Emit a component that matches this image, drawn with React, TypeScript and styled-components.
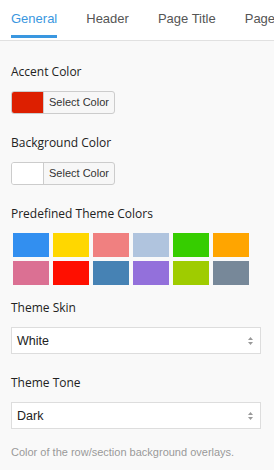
import React from 'react';
import styled, { createGlobalStyle } from 'styled-components';

const GlobalStyle = createGlobalStyle`
  html, body {
    margin: 0;
    padding: 0;
    background: #f9f9f9;
  }
  body {
    font-family: "Open Sans", "Liberation Sans", sans-serif;
    overflow: hidden;
  }
`;

const Wrapper = styled.div`
  width: 274px;
  height: 470px;
  background: #f9f9f9;
`;

const Tabs = styled.div`
  display: flex;
  background: #fff;
  border-bottom: 1px solid #e1e1e1;
  height: 40px;
  padding-left: 11px;
  white-space: nowrap;
  overflow: hidden;
`;

const Tab = styled.div<{ active?: boolean }>`
  font-family: "Liberation Sans", Arial, sans-serif;
  font-size: 13px;
  line-height: 37px;
  margin-right: 29px;
  color: ${p => (p.active ? '#3a97e0' : '#555')};
  border-bottom: 3px solid ${p => (p.active ? '#3a97e0' : 'transparent')};
  height: 38px;
  box-sizing: border-box;
  margin-bottom: -1px;
  flex-shrink: 0;
`;

const Panel = styled.div`
  padding: 22px 11px 0 11px;
`;

const Label = styled.div`
  font-size: 12px;
  color: #222;
  line-height: 17px;
  margin-bottom: 11px;
`;

const Field = styled.div<{ gap?: number }>`
  margin-bottom: ${p => p.gap ?? 20}px;
`;

const Picker = styled.div`
  display: flex;
  width: fit-content;
  height: 23px;
  border: 1px solid #ccc;
  border-radius: 3px;
  box-sizing: border-box;
  overflow: hidden;
  background: #f7f7f7;
`;

const Swatch = styled.div<{ color: string }>`
  width: 31px;
  background: ${p => p.color};
  border-right: 1px solid #ccc;
`;

const PickButton = styled.div`
  font-family: "Liberation Sans", Arial, sans-serif;
  font-size: 11px;
  color: #333;
  padding: 0 5px 0 5px;
  line-height: 21px;
`;

const Grid = styled.div`
  display: grid;
  grid-template-columns: repeat(6, 36px);
  grid-auto-rows: 24px;
  gap: 4px;
  padding-left: 2px;
`;

const Chip = styled.div<{ color: string }>`
  background: ${p => p.color};
`;

const Select = styled.div`
  display: flex;
  align-items: center;
  justify-content: space-between;
  width: 250px;
  height: 27px;
  box-sizing: border-box;
  border: 1px solid #ddd;
  background: #fff;
  padding: 0 6px 0 5px;
  font-family: "Liberation Sans", Arial, sans-serif;
  font-size: 12.5px;
  color: #222;
`;

const Hint = styled.div`
  font-family: "Liberation Sans", Arial, sans-serif;
  font-size: 11px;
  color: #999;
`;

const Arrows = () => (
  <svg width="7" height="10" viewBox="0 0 7 10">
    <path d="M3.5 1 L6 4 H1 Z" fill="#999" />
    <path d="M3.5 9 L6 6 H1 Z" fill="#999" />
  </svg>
);

const themeColors = [
  '#328ff0', '#ffd700', '#f08080', '#b0c4de', '#36cd00', '#ffa500',
  '#db7093', '#ff0f00', '#4682b4', '#9370db', '#9fcc00', '#778899',
];

const tabs = ['General', 'Header', 'Page Title', 'Page Footer'];

const App = () => {
  return (
    <Wrapper>
      <GlobalStyle />
      <Tabs>
        {tabs.map((t, i) => (
          <Tab key={t} active={i === 0}>
            {t}
          </Tab>
        ))}
      </Tabs>
      <Panel>
        <Field>
          <Label>Accent Color</Label>
          <Picker>
            <Swatch color="#dd1f00" />
            <PickButton>Select Color</PickButton>
          </Picker>
        </Field>
        <Field>
          <Label>Background Color</Label>
          <Picker>
            <Swatch color="#fff" />
            <PickButton>Select Color</PickButton>
          </Picker>
        </Field>
        <Field gap={14}>
          <Label>Predefined Theme Colors</Label>
          <Grid>
            {themeColors.map(c => (
              <Chip key={c} color={c} />
            ))}
          </Grid>
        </Field>
        <Field>
          <Label>Theme Skin</Label>
          <Select>
            <span>White</span>
            <Arrows />
          </Select>
        </Field>
        <Field gap={17}>
          <Label>Theme Tone</Label>
          <Select>
            <span>Dark</span>
            <Arrows />
          </Select>
        </Field>
        <Hint>Color of the row/section background overlays.</Hint>
      </Panel>
    </Wrapper>
  );
};

export default App;
